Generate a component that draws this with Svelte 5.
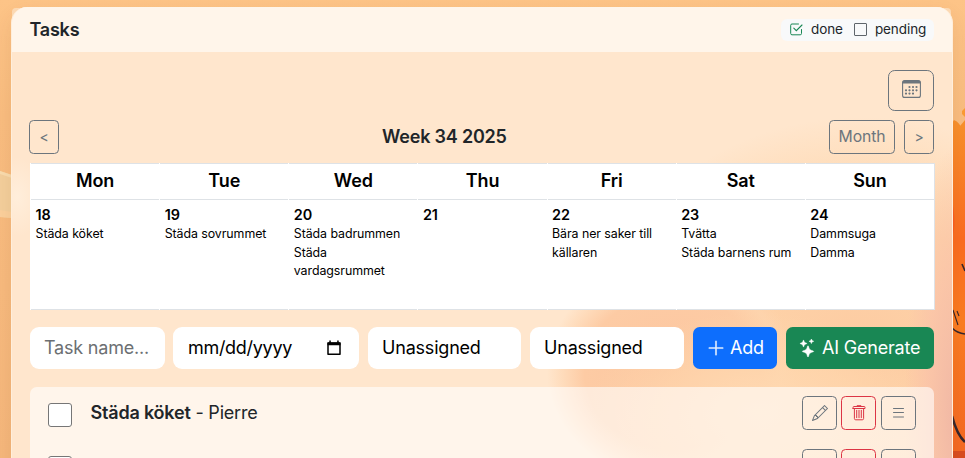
<script>
  const days = [
    { name: 'Mon', date: 18, tasks: ['Städa köket'] },
    { name: 'Tue', date: 19, tasks: ['Städa sovrummet'] },
    { name: 'Wed', date: 20, tasks: ['Städa badrummen', 'Städa vardagsrummet'] },
    { name: 'Thu', date: 21, tasks: [] },
    { name: 'Fri', date: 22, tasks: ['Bära ner saker till källaren'] },
    { name: 'Sat', date: 23, tasks: ['Tvätta', 'Städa barnens rum'] },
    { name: 'Sun', date: 24, tasks: ['Dammsuga', 'Damma'] }
  ];
  const tasks = [{ title: 'Städa köket', who: 'Pierre' }, { title: '', who: '' }];
</script>

<div class="page">
  <svg class="art" width="965" height="458" viewBox="0 0 965 458" aria-hidden="true">
    <defs>
      <linearGradient id="bg" x1="0" y1="0" x2="0" y2="1">
        <stop offset="0" stop-color="#fdc487" />
        <stop offset=".25" stop-color="#f9bd80" />
        <stop offset="1" stop-color="#f5b77c" />
      </linearGradient>
      <linearGradient id="fire" x1="0" y1="0" x2="0" y2="1">
        <stop offset="0" stop-color="#f8912c" />
        <stop offset=".35" stop-color="#fb6c20" />
        <stop offset=".6" stop-color="#fb7d22" />
        <stop offset="1" stop-color="#f46823" />
      </linearGradient>
    </defs>
    <rect width="965" height="458" fill="url(#bg)" />
    <path d="M0 171 L12 175 V218 L0 217Z" fill="#f3cf9c" />
    <path d="M0 171 L12 175 V178 L0 174Z" fill="#f9dcae" />
    <path d="M0 210 L12 212 V218 L0 217Z" fill="#fbd09c" />
    <path d="M952 123 L954 120 Q960 122 963 132 L960 126 L965 120 V458 H952Z" fill="url(#fire)" />
    <path d="M962 111 l3 -3 v9 l-3 -3z" fill="#fb9b34" />
    <path d="M952 200 Q957 225 952 238Z" fill="#fa5f20" />
    <path d="M952 451 H965 V458 H952Z" fill="#d94d20" />
    <g fill="none" stroke="#36262c" stroke-width="1.6">
      <path d="M962 264 l3 7" />
      <path d="M953 310 l5 15 M957 311 l2 5" stroke-width="1.1" />
      <path d="M952 328 Q957 333 965 334" />
      <path d="M952 416 Q957 435 965 442" stroke-width="2.6" />
    </g>
    <rect x="12" y="8" width="939" height="60" rx="4" fill="#fedcb6" />
  </svg>

  <main class="card">
    <header>
      <h1>Tasks</h1>
      <div class="legend">
        <svg class="done" width="13" height="13" viewBox="0 0 13 13" fill="none" stroke="currentColor" stroke-linecap="round">
          <path d="M8.500 1H2A1.300 1.300 0 0 0 .7 2.300V10.500A1.300 1.300 0 0 0 2 11.800H10.200A1.300 1.300 0 0 0 11.500 10.500V6.500" />
          <path d="M3.800 5.200L6.300 7.700L12 2" stroke-width="1.1" />
        </svg>
        <span class="l1">done</span>
        <i></i>
        <span>pending</span>
      </div>
    </header>

    <div class="body">
      <div class="tools">
        <button class="btn cal" aria-label="Calendar">
          <svg width="19" height="18" viewBox="0 0 19 18" fill="currentColor">
            <rect x=".6" y=".6" width="17.800" height="16.800" rx="2" fill="none" stroke="currentColor" stroke-width="1.1" />
            <path d="M.5 2.500A2 2 0 0 1 2.500 .5H16.500A2 2 0 0 1 18.500 2.500V3.600H.5Z" />
            <g>
              <circle cx="7.500" cy="7" r="1.100" /><circle cx="11" cy="7" r="1.100" /><circle cx="14.500" cy="7" r="1.100" />
              <circle cx="4" cy="10.300" r="1.100" /><circle cx="7.500" cy="10.300" r="1.100" /><circle cx="11" cy="10.300" r="1.100" /><circle cx="14.500" cy="10.300" r="1.100" />
              <circle cx="4" cy="13.600" r="1.100" /><circle cx="7.500" cy="13.600" r="1.100" /><circle cx="11" cy="13.600" r="1.100" />
            </g>
          </svg>
        </button>
      </div>

      <nav>
        <div class="side"><button class="btn arrow">&lt;</button></div>
        <h2>Week 34 2025</h2>
        <div class="side right">
          <button class="btn month">Month</button>
          <button class="btn arrow">&gt;</button>
        </div>
      </nav>

      <section class="week">
        {#each days as day}
          <div class="day">
            <div class="name">{day.name}</div>
            <div class="cell">
              <strong>{day.date}</strong>
              {#each day.tasks as task}<p>{task}</p>{/each}
            </div>
          </div>
        {/each}
      </section>

      <form>
        <div class="field task">Task name...</div>
        <div class="field date">
          <span>mm/dd/yyyy</span>
          <svg width="14" height="16" viewBox="0 0 14 16">
            <path d="M1 3.2H13V14.3H1Z" fill="none" stroke="#000" stroke-width="1.5" stroke-linejoin="round" />
            <path d="M.5 2.2H13.5V5.2H.5ZM2.3.5H3.8V3H2.3ZM10.2.5H11.7V3H10.2Z" />
          </svg>
        </div>
        <div class="field who">Unassigned</div>
        <div class="field who2">Unassigned</div>
        <button type="button" class="add">
          <svg width="18" height="18" viewBox="0 0 16 16" fill="currentColor" stroke="currentColor" stroke-width=".3"><path d="M8 1.500a.5.5 0 0 1 .5.5v5.500H14a.5.5 0 0 1 0 1H8.500V14a.5.5 0 0 1-1 0V8.500H2a.5.5 0 0 1 0-1h5.500V2a.5.5 0 0 1 .5-.5" /></svg>
          Add
        </button>
        <button type="button" class="ai">
          <svg width="18" height="18" viewBox="0 0 16 16" fill="currentColor" stroke="currentColor" stroke-width=".4"><path d="M7.657 6.247c.11-.33.576-.33.686 0l.645 1.937a2.89 2.89 0 0 0 1.829 1.828l1.936.645c.33.11.33.576 0 .686l-1.937.645a2.89 2.89 0 0 0-1.828 1.829l-.645 1.936a.361.361 0 0 1-.686 0l-.645-1.937a2.89 2.89 0 0 0-1.828-1.828l-1.937-.645a.361.361 0 0 1 0-.686l1.937-.645a2.89 2.89 0 0 0 1.828-1.828zM3.794 1.148a.217.217 0 0 1 .412 0l.387 1.162c.173.518.579.924 1.097 1.097l1.162.387a.217.217 0 0 1 0 .412l-1.162.387A1.73 1.73 0 0 0 4.593 5.69l-.387 1.162a.217.217 0 0 1-.412 0L3.407 5.69A1.73 1.73 0 0 0 2.310 4.593l-1.162-.387a.217.217 0 0 1 0-.412l1.162-.387A1.73 1.73 0 0 0 3.407 2.310zM10.863.099a.145.145 0 0 1 .274 0l.258.774c.115.346.386.617.732.732l.774.258a.145.145 0 0 1 0 .274l-.774.258a1.16 1.16 0 0 0-.732.732l-.258.774a.145.145 0 0 1-.274 0l-.258-.774a1.16 1.16 0 0 0-.732-.732L9.100 2.137a.145.145 0 0 1 0-.274l.774-.258c.346-.115.617-.386.732-.732z" /></svg>
          AI Generate
        </button>
      </form>

      <ul>
        {#each tasks as task}
          <li>
            <span class="box"></span>
            <div class="title">{#if task.title}<b>{task.title}</b> - {task.who}{/if}</div>
            <button class="btn act" aria-label="Edit">
              <svg width="16" height="16" viewBox="0 0 16 16" fill="currentColor"><path d="M12.146.146a.5.5 0 0 1 .708 0l3 3a.5.5 0 0 1 0 .708l-10 10a.5.5 0 0 1-.168.110l-5 2a.5.5 0 0 1-.650-.650l2-5a.5.5 0 0 1 .110-.168zM11.207 2.500 13.500 4.793 14.793 3.500 12.500 1.207zm1.586 3L10.500 3.207 4 9.707V10h.5a.5.5 0 0 1 .5.5v.5h.5a.5.5 0 0 1 .5.5v.5h.293zm-9.761 5.175-.106.106-1.528 3.821 3.821-1.528.106-.106A.5.5 0 0 1 5 12.500V12h-.5a.5.5 0 0 1-.5-.5V11h-.5a.5.5 0 0 1-.468-.325" /></svg>
            </button>
            <button class="btn act del" aria-label="Delete">
              <svg width="16" height="16" viewBox="0 0 16 16" fill="none" stroke="currentColor"><path d="M2 3.500H14V2.300Q14 1.500 13.200 1.500H2.800Q2 1.500 2 2.300ZM6 1.500V.7H10V1.500M3.400 3.800V13.500Q3.400 14.800 4.700 14.800H11.300Q12.600 14.800 12.600 13.500V3.800M5.700 5.300V12.700M8 5.300V12.700M10.300 5.300V12.700" stroke-linecap="round" /></svg>
            </button>
            <button class="btn act menu" aria-label="Reorder">
              <svg width="16" height="16" viewBox="0 0 16 16" stroke="currentColor" stroke-linecap="round"><path d="M2.500 3.500H12.500M2.500 7.500H12.500M2.500 12H12.500" /></svg>
            </button>
          </li>
        {/each}
      </ul>
    </div>
  </main>
</div>

<style>
  :global(body) { margin: 0; overflow: hidden; }
  .page, .page * { box-sizing: border-box; }
  .page {
    position: relative;
    width: 965px;
    height: 458px;
    overflow: hidden;
    padding: 7px 12px 0 11px;
    font: 18px/27px Inter, sans-serif;
    letter-spacing: -.2px;
    color: #212529;
  }
  .art { position: absolute; inset: 0; }
  .card {
    position: relative;
    height: 480px;
    border: 1px solid #ffeedb;
    border-top: 0;
    border-radius: 16px 16px 0 0;
    overflow: hidden;
    box-shadow: 0 8px 20px rgba(120, 60, 10, .1);
    background:
      radial-gradient(ellipse 50px 270px at 942px 410px, #f1b8a5 0, rgba(250, 194, 168, .75) 55%, transparent 100%),
      radial-gradient(ellipse 170px 100px at 745px 405px, #ffd9b2 0, rgba(255, 215, 173, .6) 60%, transparent 100%),
      radial-gradient(ellipse 125px 110px at 660px 365px, #fcc6a0 0, #fdcba4 70%, rgba(254, 213, 176, .6) 88%, transparent 100%),
      radial-gradient(ellipse 270px 230px at 850px 340px, #fdcba2 0, #fed4a9 55%, transparent 100%),
      radial-gradient(ellipse 25px 40px at 5px 190px, #ffeedb, transparent),
      #ffe6cd;
  }
  header {
    height: 45px;
    padding: 0 18px;
    display: flex;
    align-items: center;
    justify-content: space-between;
    background: #fff5ea;
  }
  h1, h2 { margin: 0; font-size: 18px; line-height: 27px; font-weight: 600; }
  h1 { margin-left: -.6px; }
  h2 { position: relative; top: -.6px; }
  .legend {
    display: flex;
    align-items: center;
    width: 153px;
    height: 22px;
    padding-left: 9px;
    border-radius: 6px;
    background: #f8f9fa;
    font-size: 13.5px;
    line-height: 20px;
    letter-spacing: -.08px;
  }
  .legend span { position: relative; top: -.5px; }
  .done { color: #198754; }
  .l1 { margin-left: 8px; }
  .legend i { width: 13px; height: 13px; border: 1px solid #5f656b; border-radius: 1px; margin: 0 8px 0 11px; }
  .body { padding: 18px 18px 0; }
  button { font-family: inherit; margin: 0; padding: 0; letter-spacing: inherit; }
  .btn {
    display: flex;
    align-items: center;
    justify-content: center;
    border: 1px solid #6c757d;
    border-radius: 4.5px;
    background: transparent;
    color: #6c757d;
    font-size: 15.75px;
    letter-spacing: -.1px;
  }
  .tools { display: flex; justify-content: flex-end; }
  .cal { width: 46px; height: 41px; border-radius: 6.75px; padding-bottom: 3px; }
  nav { display: flex; align-items: center; margin-top: 9px; height: 34px; }
  nav h2 { flex: none; }
  .side { flex: 1 1 0; display: flex; margin-left: -1px; }
  .side:first-child { flex: 0 0 353px; }
  .right { justify-content: flex-end; gap: 9px; }
  .arrow { width: 30px; height: 34px; font-size: 14px; padding-bottom: 1px; }
  .month { width: 66px; height: 34px; padding-bottom: 1px; }
  .week { display: flex; margin-top: 9px; height: 147px; margin-right: -1px; border-right: 1px solid #dee2e6; background: #fff; color: #000; }
  .day { flex: 1 1 0; border-left: 1px solid #fff; min-width: 0; }
  .name { height: 37px; border: solid #dee2e6; border-width: 1px 0; font-weight: 600; text-align: center; line-height: 33.500px; letter-spacing: -.1px; }
  .cell { height: 110px; padding: 5px 4px 0 4.500px; border-bottom: 1px solid #dee2e6; font-size: 12.4px; line-height: 18.5px; letter-spacing: -.07px; }
  .cell strong { display: block; font-size: 14.4px; font-weight: 600; line-height: 19px; padding-bottom: 1px; }
  .cell p { margin: 0; }
  form { display: flex; margin-top: 17px; height: 42px; }
  .field { border-radius: 9px; background: #fff; color: #000; padding: 0 14px; line-height: 42px; white-space: nowrap; }
  .task { width: 135px; color: #6c6f72; }
  .date { width: 186px; margin-left: 8px; display: flex; justify-content: space-between; align-items: center; padding: 0 18px 0 15px; letter-spacing: -.3px; }
  .who { width: 153px; margin-left: 9px; }
  .who2 { width: 154px; margin-left: 9px; }
  .add, .ai { display: flex; align-items: center; border: 0; border-radius: 6.75px; color: #fff; font-size: 18px; white-space: nowrap; gap: 5px; margin-left: 9px; padding-bottom: 1px; }
  .add { width: 84px; padding-left: 14px; background: #0d6efd; }
  .ai { width: 148px; padding-left: 13px; background: #198754; }
  ul { list-style: none; margin: 18px 0 0; padding: 0; border-radius: 6.75px 6.75px 0 0; background: rgba(255, 255, 255, .6); height: 120px; }
  li { display: flex; align-items: flex-start; height: 53px; padding: 9px 18px; }
  .box { width: 24px; height: 24px; margin-top: 7px; border: 1px solid #767676; border-radius: 3px; background: #fff; }
  .title { flex: 1; margin: 3px 0 0 18.500px; }
  b { font-weight: 600; }
  .act { width: 35px; height: 34px; margin-left: 4px; }
  .menu { margin-left: 5px; }
  .del { color: #dc3545; border-color: #dc3545; }
</style>
